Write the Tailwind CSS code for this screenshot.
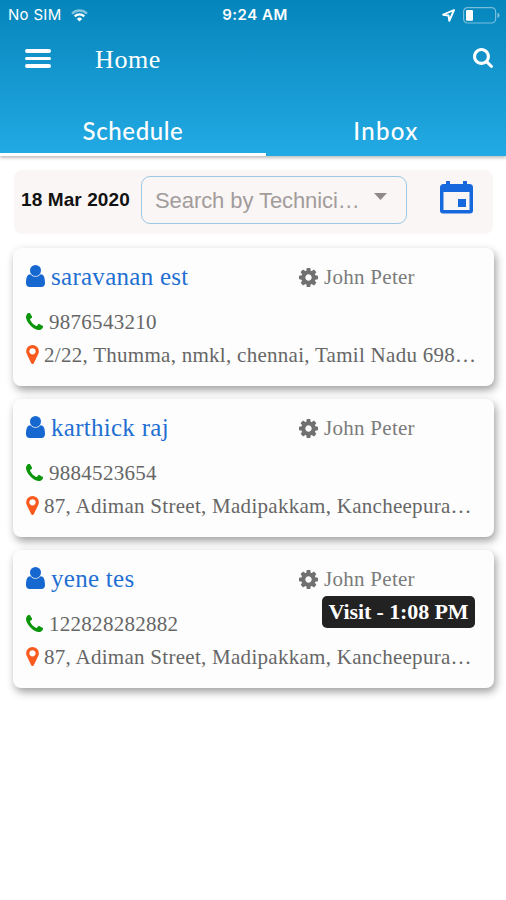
<!DOCTYPE html>
<html lang="en">
<head>
    <meta charset="UTF-8">
    <meta name="viewport" content="width=device-width, initial-scale=1.0">
    <title>Home</title>
    <script src="https://cdn.jsdelivr.net/npm/@tailwindcss/browser@4"></script>
</head>
<body class="bg-white h-[900px] overflow-hidden font-['Liberation_Serif',serif]">
    <!-- Icon sprites -->
    <svg class="hidden">
        <symbol id="user" viewBox="0 0 19 22"><circle cx="9.500" cy="5.500" r="5.500"/><path d="M4.500 9.300C1.300 9.300 0 12.500 0 18.300 0 20.700 1.500 22 3.500 22h12c2 0 3.500-1.300 3.500-3.700 0-5.800-1.300-9-4.500-9-1.400 1.700-3 2.500-5 2.500s-3.600-.8-5-2.500z"/></symbol>
        <symbol id="phone" viewBox="192 128 1408 1408"><path d="M1600 1240q0 27-10 70.5t-21 68.5q-21 50-122 106-94 51-186 51-27 0-53-3.5t-57.5-12.5-47-14.5-55.5-20.5-49-18q-98-35-175-83-127-79-264-216t-216-264q-48-77-83-175-3-9-18-49t-20.5-55.5-14.5-47-12.5-57.5-3.5-53q0-92 51-186 56-101 106-122 25-11 68.5-21t70.5-10q14 0 21 3 18 6 53 76 11 19 30 54t35 63.5 31 53.5q3 4 17.5 25t21.5 35.5 7 28.5q0 20-28.5 50t-62 55-62 53-28.5 46q0 9 5 22.5t8.5 20.5 14 24 11.5 19q76 137 174 235t235 174q2 1 19 11.5t24 14 20.5 8.5 22.5 5q18 0 46-28.5t53-62 55-62 50-28.5q14 0 28.5 7t35.5 21.5 25 17.5q25 15 53.5 31t63.5 35 54 30q70 35 76 53 3 7 3 21z"/></symbol>
        <symbol id="marker" viewBox="384 128 1024 1536"><path d="M1152 640q0-106-75-181t-181-75-181 75-75 181 75 181 181 75 181-75 75-181zm256 0q0 109-33 179l-364 774q-16 33-47.5 52t-67.5 19-67.5-19-46.5-52l-365-774q-33-70-33-179 0-212 150-362t362-150 362 150 150 362z"/></symbol>
        <symbol id="cog" viewBox="128 128 1536 1536"><path d="M1152 896q0-106-75-181t-181-75-181 75-75 181 75 181 181 75 181-75 75-181zm512-109v222q0 12-8 23t-20 13l-185 28q-19 54-39 91 35 50 107 138 10 12 10 25t-9 23q-27 37-99 108t-94 71q-12 0-26-9l-138-108q-44 23-91 38-16 136-29 186-7 28-36 28h-222q-14 0-24.5-8.5t-11.5-21.5l-28-184q-49-16-90-37l-141 107q-10 9-25 9-14 0-25-11-126-114-165-168-7-10-7-23 0-12 8-23 15-21 51-66.5t54-70.5q-27-50-41-99l-183-27q-13-2-21-12.5t-8-23.5v-222q0-12 8-23t19-13l186-28q14-46 39-92-40-57-107-138-10-12-10-24 0-10 9-23 26-36 98.5-107.5t94.5-71.5q13 0 26 10l138 107q44-23 91-38 16-136 29-186 7-28 36-28h222q14 0 24.5 8.5t11.5 21.5l28 184q49 16 90 37l142-107q9-9 24-9 13 0 25 10 129 119 165 170 7 8 7 22 0 12-8 23-15 21-51 66.5t-54 70.5q26 50 41 98l183 28q13 2 21 12.5t8 23.5z"/></symbol>
    </svg>

    <!-- Header -->
    <header class="h-[156px] flex flex-col bg-linear-to-b from-[#0485bb] to-[#22aae4] text-white shadow-[0_2px_3px_rgba(0,0,0,0.25)]">
        <div class="h-[30px] grid grid-cols-3 items-center pt-px pl-2 pr-[6px] font-[Inter,sans-serif] text-[15px]">
            <div class="flex items-center gap-[9px]">
                <span class="tracking-[0.3px]">No SIM</span>
                <svg class="w-[17px] h-[13px]" viewBox="0 0 17 13" fill="none" stroke="currentColor" stroke-width="2.3">
                    <path d="M1 4.6a10.6 10.6 0 0 1 15 0" opacity=".5"/>
                    <path d="M3.7 7.4a6.8 6.8 0 0 1 9.6 0"/>
                    <path d="M8.5 12.6 5.9 9.9a3.7 3.7 0 0 1 5.2 0z" fill="currentColor" stroke="none"/>
                </svg>
            </div>
            <span class="pl-[2px] text-center font-semibold tracking-[0.5px] whitespace-nowrap">9:24 AM</span>
            <div class="flex items-center justify-end gap-2">
                <svg class="w-[13px] h-[13px]" viewBox="0 0 13 13" fill="none" stroke="currentColor" stroke-width="1.9" stroke-linejoin="round"><path d="M12 1 1.2 5.7l5.3.8.8 5.3z"/></svg>
                <svg class="w-[37px] h-[17px]" viewBox="0 0 37 17">
                    <rect x=".6" y=".6" width="32" height="15.4" rx="4" fill="none" stroke="#fff" stroke-opacity=".45" stroke-width="1.2"/>
                    <rect x="3" y="3" width="7" height="10.8" rx="1" fill="#fff"/>
                    <path d="M34.5 5.5q2 .8 2 2.8t-2 2.8z" fill="#fff" fill-opacity=".5"/>
                </svg>
            </div>
        </div>
        <div class="h-14 flex items-center pl-[25px] pr-[13px]">
            <div class="mt-px w-[26px] flex flex-col gap-[4px]">
                <span class="h-[3.500px] rounded-sm bg-white"></span>
                <span class="h-[3.500px] rounded-sm bg-white"></span>
                <span class="h-[3.500px] rounded-sm bg-white"></span>
            </div>
            <h1 class="mt-[3px] ml-[44px] grow text-[26px] tracking-[0.6px]">Home</h1>
            <svg class="w-5 h-5" viewBox="64 128 1664 1664" fill="currentColor"><path d="M1216 832q0-185-131.5-316.5t-316.5-131.5-316.5 131.5-131.5 316.5 131.5 316.5 316.5 131.5 316.5-131.5 131.5-316.5zm512 832q0 52-38 90t-90 38q-54 0-90-38l-343-342q-179 124-399 124-143 0-273.5-55.5t-225-150-150-225-55.5-273.5 55.5-273.5 150-225 225-150 273.5-55.5 273.5 55.5 225 150 150 225 55.5 273.5q0 220-124 399l343 343q37 37 37 90z"/></svg>
        </div>
        <nav class="grow flex font-[Lato,sans-serif] text-[24px] font-medium">
            <div class="w-[266px] flex items-center justify-center pt-[23px] border-b-[3px] border-white tracking-[0.6px]">Schedule</div>
            <div class="grow flex items-center justify-center pt-[23px] pb-[3px] tracking-[1.300px]">Inbox</div>
        </nav>
    </header>

    <main class="pt-[14px] pl-[13px] pr-3">
        <!-- Filter bar -->
        <div class="h-[64px] mx-px flex items-center rounded-lg bg-[#faf6f5] pl-[7px] pr-5 pb-1 font-['Liberation_Sans',sans-serif]">
            <span class="w-[120px] pt-px text-[19px] font-bold tracking-[0.1px] text-[#111] whitespace-nowrap">18 Mar 2020</span>
            <div class="w-[266px] h-[48px] flex items-center justify-between rounded-[9px] border border-[#9cc8e4] pl-[13px] pr-[19px] text-[22px] text-[#a29c9c]">
                <span class="tracking-[-0.080px] whitespace-nowrap">Search by Technici…</span>
                <svg class="w-[13px] h-[7px] mb-[8px]" viewBox="0 0 15 7" preserveAspectRatio="none" fill="#918a8a"><path d="M0 0h15L7.5 7z"/></svg>
            </div>
            <svg class="ml-auto mb-[5px] w-[33px] h-[33px]" viewBox="0 0 33 33" fill="#1668dc">
                <path fill-rule="evenodd" d="M6 0h4v3h13V0h4v3h2.500a3.500 3.500 0 0 1 3.500 3.500v23a3 3 0 0 1-3 3H3a3 3 0 0 1-3-3v-23A3.500 3.500 0 0 1 3.500 3H6zM3.500 11v18h26V11z"/>
                <path d="M18 18h8v8h-8z"/>
            </svg>
        </div>

        <!-- Appointments -->
        <div class="mt-[14px] flex flex-col gap-[13px] text-[21px] tracking-[0.28px] text-[#666] [&>*]:h-[138px] [&>*]:rounded-lg [&>*]:bg-[#fdfdfd] [&>*]:pl-[13px] [&>*]:pr-4 [&>*]:shadow-[2px_4px_8px_rgba(0,0,0,0.38)]">
            <div>
                <div class="h-[58px] flex items-center">
                    <div class="w-[273px] flex items-center gap-[6px] text-[25px] text-[#1f6fd2]">
                        <svg class="w-[19px] h-[22px] mb-[2px] fill-[#1668d0]"><use href="#user"/></svg>
                        <span>saravanan est</span>
                    </div>
                    <svg class="w-[19px] h-[19px] mr-[6px] fill-[#6f706f]"><use href="#cog"/></svg>
                    <span class="mt-px text-[#7b7b7b]">John Peter</span>
                </div>
                <div class="h-[33px] flex items-center gap-[6px]">
                    <svg class="w-[17px] h-[17px] mb-[2px] fill-[#0b950b]"><use href="#phone"/></svg>
                    <span>9876543210</span>
                </div>
                <div class="h-[33px] flex items-center gap-[5px]">
                    <svg class="w-[13px] h-[19px] mb-[2px] fill-[#fa5a1e]"><use href="#marker"/></svg>
                    <span class="whitespace-nowrap">2/22, Thumma, nmkl, chennai, Tamil Nadu 698…</span>
                </div>
            </div>
            <div>
                <div class="h-[58px] flex items-center">
                    <div class="w-[273px] flex items-center gap-[6px] text-[25px] text-[#1f6fd2]">
                        <svg class="w-[19px] h-[22px] mb-[2px] fill-[#1668d0]"><use href="#user"/></svg>
                        <span>karthick raj</span>
                    </div>
                    <svg class="w-[19px] h-[19px] mr-[6px] fill-[#6f706f]"><use href="#cog"/></svg>
                    <span class="mt-px text-[#7b7b7b]">John Peter</span>
                </div>
                <div class="h-[33px] flex items-center gap-[6px]">
                    <svg class="w-[17px] h-[17px] mb-[2px] fill-[#0b950b]"><use href="#phone"/></svg>
                    <span>9884523654</span>
                </div>
                <div class="h-[33px] flex items-center gap-[5px]">
                    <svg class="w-[13px] h-[19px] mb-[2px] fill-[#fa5a1e]"><use href="#marker"/></svg>
                    <span class="whitespace-nowrap">87, Adiman Street, Madipakkam, Kancheepura…</span>
                </div>
            </div>
            <div class="relative">
                <div class="h-[58px] flex items-center">
                    <div class="w-[273px] flex items-center gap-[6px] text-[25px] text-[#1f6fd2]">
                        <svg class="w-[19px] h-[22px] mb-[2px] fill-[#1668d0]"><use href="#user"/></svg>
                        <span>yene tes</span>
                    </div>
                    <svg class="w-[19px] h-[19px] mr-[6px] fill-[#6f706f]"><use href="#cog"/></svg>
                    <span class="mt-px text-[#7b7b7b]">John Peter</span>
                </div>
                <div class="h-[33px] flex items-center gap-[6px]">
                    <svg class="w-[17px] h-[17px] mb-[2px] fill-[#0b950b]"><use href="#phone"/></svg>
                    <span>122828282882</span>
                </div>
                <div class="h-[33px] flex items-center gap-[5px]">
                    <svg class="w-[13px] h-[19px] mb-[2px] fill-[#fa5a1e]"><use href="#marker"/></svg>
                    <span class="whitespace-nowrap">87, Adiman Street, Madipakkam, Kancheepura…</span>
                </div>
                <span class="absolute right-[19px] top-[46px] w-[153px] h-8 flex items-center justify-center rounded-[5px] bg-[#222] pb-px text-[22px] tracking-[-0.100px] font-bold text-white whitespace-nowrap">Visit - 1:08 PM</span>
            </div>
        </div>
    </main>
</body>
</html>
